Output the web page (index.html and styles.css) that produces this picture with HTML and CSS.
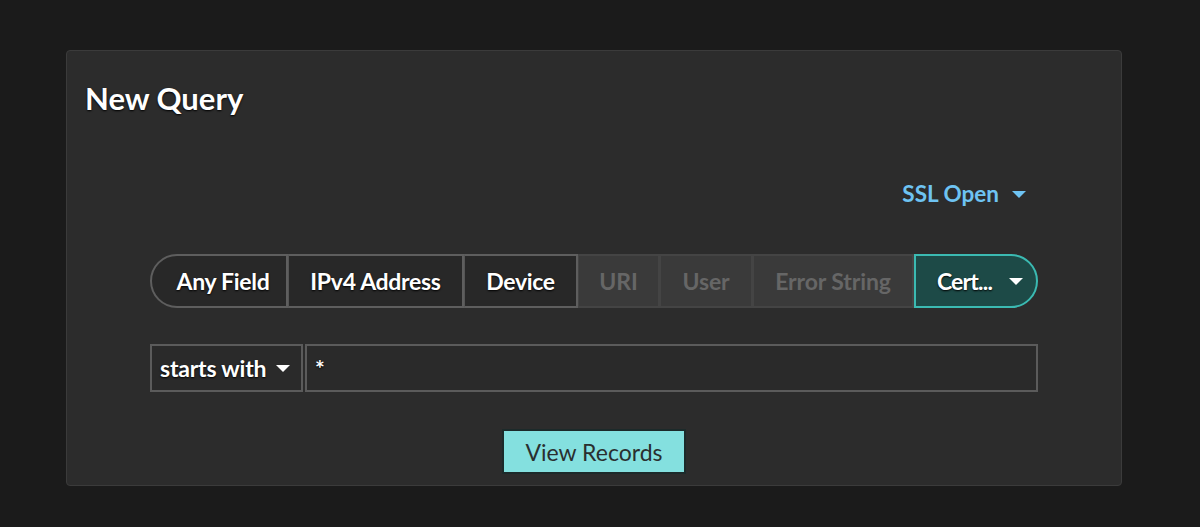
FILE: index.html
```html
<!DOCTYPE html>
<html lang="en">
<head>
    <meta charset="UTF-8">
    <title>New Query</title>
    <link rel="stylesheet" href="styles.css">
</head>
<body>
    <div class="panel">
        <h1 class="title">New Query</h1>

        <div class="source-row">
            <button class="source-btn">SSL Open <span class="caret"></span></button>
        </div>

        <!-- field selector -->
        <div class="segments">
            <div class="seg seg-first">Any Field</div>
            <div class="seg">IPv4 Address</div>
            <div class="seg">Device</div>
            <div class="seg seg-off">URI</div>
            <div class="seg seg-off">User</div>
            <div class="seg seg-off">Error String</div>
            <div class="seg seg-active">Cert... <span class="caret caret-white"></span></div>
        </div>

        <div class="filter-row">
            <div class="operator">starts with <span class="caret caret-white"></span></div>
            <div class="value">*</div>
        </div>

        <div class="actions">
            <button class="btn-view">View Records</button>
        </div>
    </div>
</body>
</html>
```

FILE: styles.css
```css
* {
    margin: 0;
    padding: 0;
    box-sizing: border-box;
}

body {
    background: #1b1b1b;
    font-family: Lato, "Open Sans", sans-serif;
    color: #fff;
    height: 527px;
    overflow: hidden;
    padding: 50px 0 0 66px;
}

.panel {
    width: 1056px;
    height: 436px;
    background: #2c2c2c;
    border: 1px solid #3b3b3b;
    border-radius: 4px;
    padding: 29px 83px 0 83px;
}

.title {
    font-size: 31px;
    font-weight: 700;
    line-height: 36px;
    margin-left: -65px;
    color: #fff;
    text-shadow: 0 1px 2px #000;
}

.source-row {
    display: flex;
    justify-content: flex-end;
    margin-top: 64px;
    padding-right: 12px;
}

.source-btn {
    background: none;
    border: none;
    font-family: inherit;
    font-size: 22.5px;
    font-weight: 700;
    line-height: 28px;
    color: #6ec3f2;
    display: flex;
    align-items: center;
    gap: 13px;
}

.caret {
    display: inline-block;
    width: 0;
    height: 0;
    border-left: 7px solid transparent;
    border-right: 7px solid transparent;
    border-top: 7px solid #6ec3f2;
}

.caret-white {
    border-top-color: #fff;
}

.segments {
    display: flex;
    height: 54px;
    margin-top: 46px;
    font-size: 23px;
    font-weight: 700;
    letter-spacing: -0.3px;
}

.seg {
    display: flex;
    align-items: center;
    justify-content: center;
    background: #282828;
    border: 2px solid #5e5e5e;
    border-left: 1px solid #555;
    color: #fff;
    text-shadow: 0 1px 2px #000;
}

.seg:nth-child(1) { width: 138px; }
.seg:nth-child(2) { width: 176px; }
.seg:nth-child(3) { width: 114px; }
.seg:nth-child(4) { width: 82px; }
.seg:nth-child(5) { width: 93px; }
.seg:nth-child(6) { width: 161px; }
.seg:nth-child(7) { width: 124px; }

.seg-first {
    border-left: 2px solid #5e5e5e;
    border-radius: 27px 0 0 27px;
    padding-left: 8px;
}

.seg-off {
    background: #3a3a3a;
    border-color: #444;
    color: #666;
    letter-spacing: -0.1px;
    text-shadow: none;
}

.seg-active {
    background: #1d4a47;
    border: 2px solid #3bbab2;
    border-radius: 0 27px 27px 0;
    gap: 17px;
    padding-left: 8px;
    letter-spacing: -0.8px;
}

.filter-row {
    display: flex;
    gap: 2px;
    height: 48px;
    margin-top: 36px;
    font-size: 23px;
    font-weight: 700;
    letter-spacing: -0.2px;
}

.operator,
.value {
    display: flex;
    align-items: center;
    background: #2a2a2a;
    border: 2px solid #5b5b5b;
    text-shadow: 0 1px 2px #000;
}

.operator {
    width: 153px;
    padding-left: 8px;
    gap: 10px;
}

.value {
    flex: 1;
    padding-left: 8px;
}

.actions {
    display: flex;
    justify-content: center;
    margin-top: 37px;
}

.btn-view {
    width: 184px;
    height: 45px;
    background: #84e0df;
    border: 2px solid #1c2a2a;
    font-family: inherit;
    font-size: 23px;
    color: #2a2f2f;
}
```
